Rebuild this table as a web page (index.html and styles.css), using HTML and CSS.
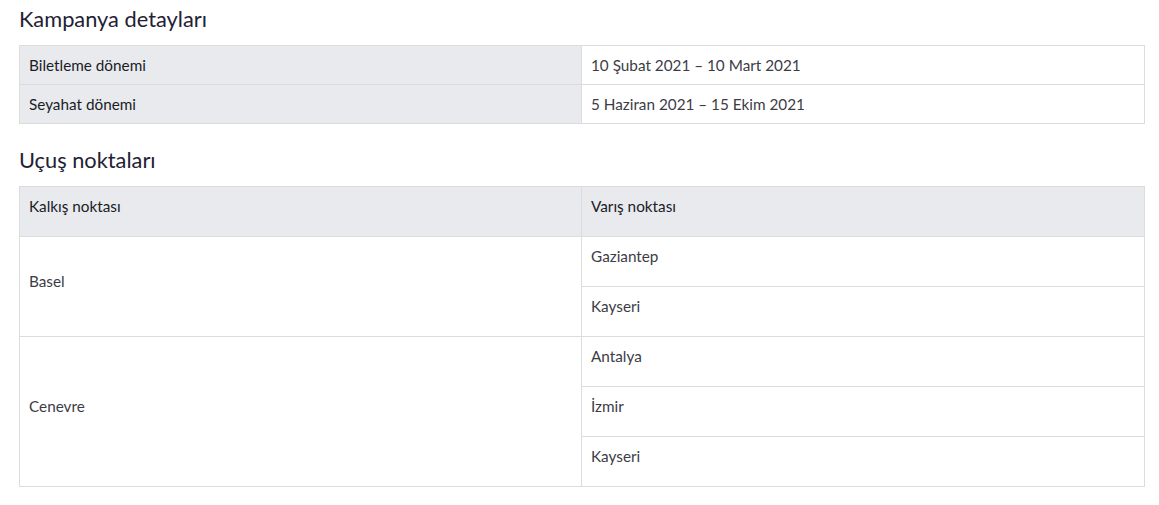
FILE: index.html
```html
<!DOCTYPE html>
<html lang="tr">
<head>
<meta charset="utf-8">
<link rel="stylesheet" href="styles.css">
</head>
<body>
<div class="page">
  <h2 class="title">Kampanya detayları</h2>
  <table class="details">
    <colgroup><col class="col-left"><col></colgroup>
    <tr><th>Biletleme dönemi</th><td>10 Şubat 2021 – 10 Mart 2021</td></tr>
    <tr><th>Seyahat dönemi</th><td>5 Haziran 2021 – 15 Ekim 2021</td></tr>
  </table>
  <h2 class="title title-second">Uçuş noktaları</h2>
  <table class="routes">
    <colgroup><col class="col-left"><col></colgroup>
    <thead>
      <tr><th><p>Kalkış noktası</p></th><th><p>Varış noktası</p></th></tr>
    </thead>
    <tbody>
      <tr><td rowspan="2"><p>Basel</p></td><td><p>Gaziantep</p></td></tr>
      <tr><td><p>Kayseri</p></td></tr>
      <tr><td rowspan="3"><p>Cenevre</p></td><td><p>Antalya</p></td></tr>
      <tr><td><p>İzmir</p></td></tr>
      <tr><td><p>Kayseri</p></td></tr>
    </tbody>
  </table>
</div>
</body>
</html>
```
FILE: styles.css
```css
html, body {
  margin: 0;
  padding: 0;
  background: #fff;
}
body {
  font-family: "Lato", "Open Sans", sans-serif;
  color: #333;
}
.page {
  padding: 0 14px 0 19px;
}
.title {
  margin: 0;
  padding-top: 5px;
  height: 45px;
  box-sizing: border-box;
  font-size: 21.8px;
  font-weight: 400;
  line-height: 27px;
  color: #1f2233;
}
.title-second {
  margin-top: 17px;
}
table {
  width: 100%;
  border-collapse: collapse;
  table-layout: fixed;
  font-size: 15.3px;
}
.col-left {
  width: 562px;
}
th, td {
  border: 1px solid #dcdcdc;
  text-align: left;
  padding: 0 9px;
}
.details th {
  background: #e8eaee;
  font-weight: 400;
  color: #1a1c26;
  height: 38px;
}
.details td {
  color: #3c3c46;
  height: 38px;
}
.routes th, .routes td {
  padding: 10px 9px;
  vertical-align: middle;
}
.routes th {
  background: #e8eaee;
  font-weight: 400;
  color: #1a1c26;
}
.routes td {
  color: #3c3c46;
}
.routes p {
  margin: 0 0 10px;
  line-height: 19px;
}
```
